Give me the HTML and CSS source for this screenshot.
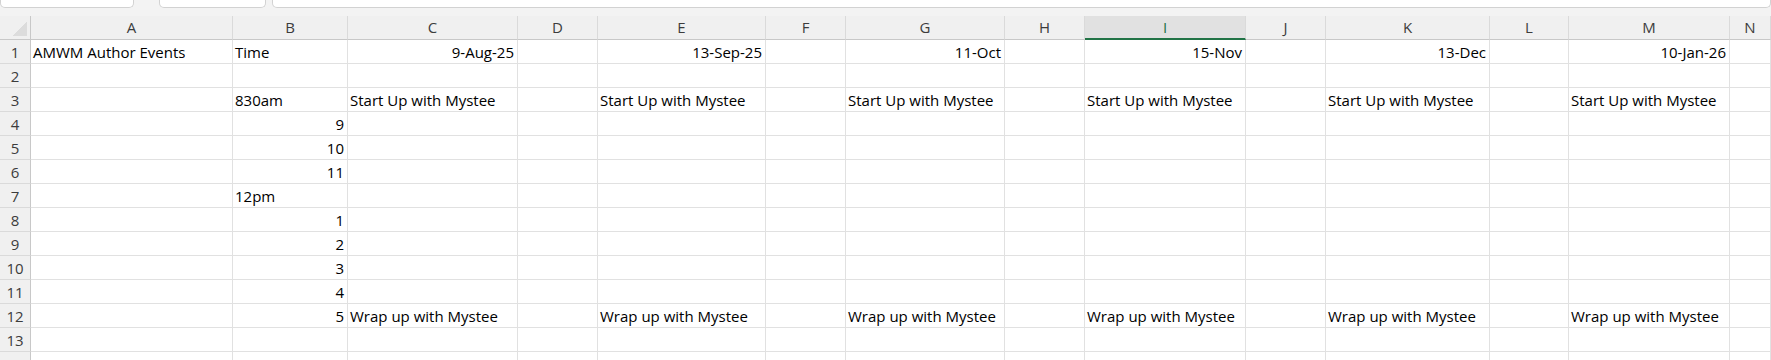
FILE: index.html
```html
<!DOCTYPE html>
<html lang="en">

<head>
  <meta charset="UTF-8">
  <meta name="viewport" content="width=device-width, initial-scale=1.0">
  <title>AMWM Author Events</title>
  <link rel="stylesheet" href="styles.css">
</head>

<body>
  <div class="toolbar">
    <div class="box name-box"></div>
    <div class="box func-box"></div>
    <div class="box formula-box"></div>
  </div>
  <div class="sheet" id="sheet"></div>
  <script>
    const cols = ["A", "B", "C", "D", "E", "F", "G", "H", "I", "J", "K", "L", "M", "N"];
    const activeCol = "I";
    const start = "Start Up with Mystee";
    const wrap = "Wrap up with Mystee";

    // [text, right aligned?]
    const data = {
      1: { A: ["AMWM Author Events"], B: ["Time"], C: ["9-Aug-25", true], E: ["13-Sep-25", true], G: ["11-Oct", true], I: ["15-Nov", true], K: ["13-Dec", true], M: ["10-Jan-26", true] },
      3: { B: ["830am"], C: [start], E: [start], G: [start], I: [start], K: [start], M: [start] },
      4: { B: ["9", true] },
      5: { B: ["10", true] },
      6: { B: ["11", true] },
      7: { B: ["12pm"] },
      8: { B: ["1", true] },
      9: { B: ["2", true] },
      10: { B: ["3", true] },
      11: { B: ["4", true] },
      12: { B: ["5", true], C: [wrap], E: [wrap], G: [wrap], I: [wrap], K: [wrap], M: [wrap] }
    };

    const sheet = document.getElementById("sheet");
    let html = `<div class="corner"><span></span></div>`;
    cols.forEach(c => {
      html += `<div class="col-head${c === activeCol ? " active" : ""}">${c}</div>`;
    });
    // last row is cut by the window edge, like in the app
    for (let r = 1; r <= 14; r++) {
      html += `<div class="row-head">${r}</div>`;
      cols.forEach(c => {
        const v = (data[r] || {})[c];
        if (v) {
          html += `<div class="cell${v[1] ? " num" : ""}">${v[0]}</div>`;
        } else {
          html += `<div class="cell"></div>`;
        }
      });
    }
    sheet.innerHTML = html;
  </script>
</body>

</html>
```

FILE: styles.css
```css
* {
  padding: 0;
  margin: 0;
  box-sizing: border-box;
}

body {
  width: 1771px;
  height: 360px;
  overflow: hidden;
  background: #fff;
  font-family: "Open Sans", "Liberation Sans", sans-serif;
}

.toolbar {
  height: 16px;
  display: flex;
  align-items: flex-start;
  background: #f3f3f3;
}

.box {
  height: 8px;
  background: #fff;
  border: solid 1px #d2d2d2;
  border-top: none;
  border-radius: 0 0 5px 5px;
}

.name-box {
  width: 134px;
}

.func-box {
  width: 107px;
  margin-left: 25px;
}

.formula-box {
  flex: 1;
  margin-left: 6px;
}

.sheet {
  display: grid;
  grid-template-columns: 31px 202px 115px 170px 80px 168px 80px 159px 80px 161px 80px 164px 79px 161px 1fr;
  grid-auto-rows: 24px;
}

.corner {
  background: #f0f0f0;
  border-right: solid 1px #c8c8c8;
  border-bottom: solid 1px #c8c8c8;
  display: flex;
  align-items: flex-end;
  justify-content: flex-end;
  padding: 3px;
}

.corner span {
  width: 14px;
  height: 14px;
  background: linear-gradient(135deg, transparent 50%, #dcdcdc 50%);
}

.col-head {
  background: #f0f0f0;
  border-right: solid 1px #dadada;
  border-bottom: solid 1px #c8c8c8;
  text-align: center;
  font-size: 15px;
  line-height: 23px;
  color: #3c3c3c;
}

.col-head.active {
  background: #e1e1e1;
  border-bottom: solid 2px #217346;
  color: #217346;
}

.row-head {
  background: #f0f0f0;
  border-right: solid 1px #c8c8c8;
  border-bottom: solid 1px #dadada;
  text-align: center;
  font-size: 15px;
  line-height: 23px;
  padding-top: 1px;
  color: #3c3c3c;
}

.cell {
  border-right: solid 1px #e1e1e1;
  border-bottom: solid 1px #e1e1e1;
  padding: 1px 3px 0 2px;
  font-size: 15px;
  line-height: 22px;
  white-space: nowrap;
  color: #000;
}

.num {
  text-align: right;
}
```
